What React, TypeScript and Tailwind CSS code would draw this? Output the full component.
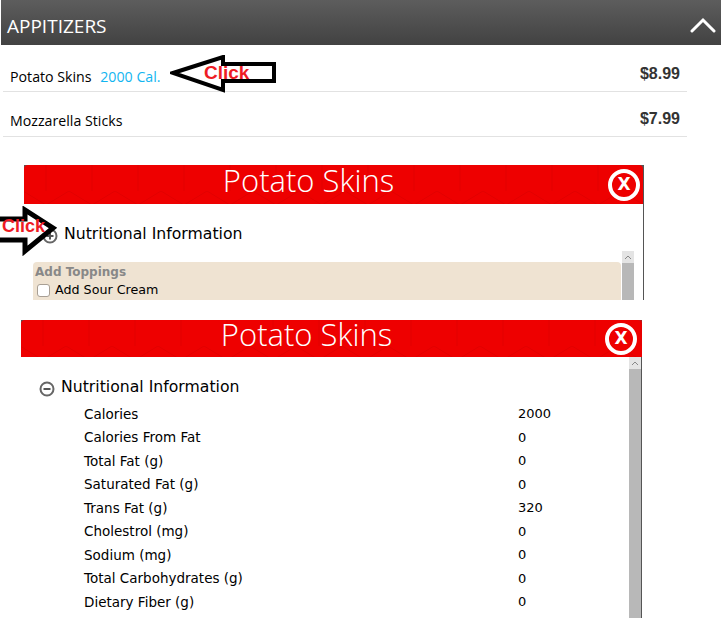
import React from "react";

const nutrition = [
  ["Calories", "2000"],
  ["Calories From Fat", "0"],
  ["Total Fat (g)", "0"],
  ["Saturated Fat (g)", "0"],
  ["Trans Fat (g)", "320"],
  ["Cholestrol (mg)", "0"],
  ["Sodium (mg)", "0"],
  ["Total Carbohydrates (g)", "0"],
  ["Dietary Fiber (g)", "0"],
];

const HexPattern = ({ id }: { id: string }) => (
  <svg className="absolute inset-0 w-full h-full" aria-hidden="true">
    <defs>
      <pattern id={id} width="92" height="40" patternUnits="userSpaceOnUse" x="-24" y="-14">
        <path d="M0 14 L23 0 L46 14 L69 0 L92 14 M0 14 V40 M46 14 V40 M92 14 V40" fill="none" stroke="#e20000" strokeWidth="1" />
      </pattern>
    </defs>
    <rect width="100%" height="100%" fill={`url(#${id})`} />
  </svg>
);

const CloseIcon = () => (
  <div className="w-8 h-8 rounded-full border-[4px] border-white flex items-center justify-center bg-[#ee0000] text-white font-bold text-[17px] leading-none font-['DejaVu_Sans',sans-serif]">
    X
  </div>
);

const ModalHeader = ({
  id,
  heightClass,
  closeClass,
  titleClass,
}: {
  id: string;
  heightClass: string;
  closeClass: string;
  titleClass: string;
}) => (
  <div className="bg-[#555]">
    <div className={`relative ${heightClass} bg-[#ee0000] flex items-start justify-center rounded-t-[4px]`}>
      <HexPattern id={id} />
      <span className={`relative -ml-[50px] text-[31px] text-white font-light font-['Open_Sans',sans-serif] ${titleClass}`}>
        Potato Skins
      </span>
      <div className={`absolute top-1/2 -translate-y-1/2 ${closeClass}`}>
        <CloseIcon />
      </div>
    </div>
  </div>
);

const ToggleIcon = ({ plus }: { plus?: boolean }) => (
  <svg width="16" height="16" viewBox="0 0 16 16" className="shrink-0 translate-y-[2px]">
    <circle cx="8" cy="8" r="6.500" fill="#fff" stroke="#666" strokeWidth="2" />
    <path d={plus ? "M4.500 8H11.500M8 4.500V11.500" : "M4.500 8H11.500"} stroke="#555" strokeWidth="2" />
  </svg>
);

const ScrollUp = () => (
  <div className="h-3 bg-[#e4e4e4] flex items-center justify-center">
    <svg width="8" height="5" viewBox="0 0 8 5">
      <path d="M1 4L4 1L7 4" fill="none" stroke="#888" strokeWidth="1" />
    </svg>
  </div>
);

export default function App() {
  return (
    <div className="relative w-[724px] h-[618px] overflow-hidden bg-white font-['Open_Sans',sans-serif]">
      {/* accordion header */}
      <div className="ml-px w-[720px] h-[45px] bg-gradient-to-b from-[#5d5d5d] to-[#424242] flex items-center justify-between pl-[6px] pr-[5px]">
        <span className="text-white text-[19px] leading-none pt-[7px]">APPITIZERS</span>
        <svg width="26" height="16" viewBox="0 0 26 16" className="mt-[5px]">
          <path d="M2 14L13 3L24 14" fill="none" stroke="#fff" strokeWidth="3" strokeLinecap="round" />
        </svg>
      </div>

      <div className="ml-[3px] w-[684px]">
        <div className="h-[47px] flex items-end justify-between border-b border-[#e2e2e2] pl-[7px] pr-[7px] pb-[5px]">
          <span className="text-[14.200px] text-black translate-y-px">
            Potato Skins <span className="ml-[5px] text-[#12b5f0]">2000 Cal.</span>
          </span>
          <span className="text-[16px] font-bold text-[#333] font-['Liberation_Sans',sans-serif]">$8.99</span>
        </div>
        <div className="h-[45px] flex items-end justify-between border-b border-[#e2e2e2] pl-[7px] pr-[7px] pb-[5px]">
          <span className="text-[14.200px] text-black">Mozzarella Sticks</span>
          <span className="text-[16px] font-bold text-[#333] font-['Liberation_Sans',sans-serif]">$7.99</span>
        </div>
      </div>

      {/* first modal, collapsed */}
      <div className="mt-[28px] ml-[24px] w-[620px] h-[135px] border-r border-[#555] font-['DejaVu_Sans',sans-serif]">
        <ModalHeader id="hex-a" heightClass="h-[39px]" closeClass="right-[3px]" titleClass="leading-[30px]" />
        <div className="flex items-center gap-[6px] pl-[18px] pt-[20px]">
          <ToggleIcon plus />
          <span className="text-[15.700px] leading-5 text-black">Nutritional Information</span>
        </div>
        <div className="flex mt-[7px] pl-[9px] pr-[9px]">
          <div className="flex-1 h-[38px] mt-[11px] bg-[#efe3d2] rounded-t-sm pl-[2px] pt-[2px]">
            <div className="text-[12px] leading-4 font-bold text-[#888]">Add Toppings</div>
            <div className="flex items-center gap-[5px] pl-[2px] text-[12.700px] leading-[20px] text-black">
              <span className="w-[13px] h-[13px] rounded-[3px] bg-white border border-[#a89f94]" />
              Add Sour Cream
            </div>
          </div>
          <div className="w-3 ml-px bg-[#b8b8b8]">
            <ScrollUp />
          </div>
        </div>
      </div>

      {/* second modal, expanded */}
      <div className="mt-[20px] ml-[21px] w-[621px] font-['DejaVu_Sans',sans-serif]">
        <ModalHeader id="hex-b" heightClass="h-[37px]" closeClass="right-[5px]" titleClass="leading-[28px]" />
        <div className="flex h-[261px] border-r border-[#555]">
          <div className="flex-1">
            <div className="flex items-center gap-[6px] pl-[18px] pt-[20px]">
              <ToggleIcon />
              <span className="text-[15.700px] leading-5 text-black">Nutritional Information</span>
            </div>
            <div className="mt-[5px] pl-[63px]">
              {nutrition.map(([label, value]) => (
                <div key={label} className="flex h-[23.500px] items-center text-black">
                  <span className="w-[434px] text-[13.500px]">{label}</span>
                  <span className="text-[13px]">{value}</span>
                </div>
              ))}
            </div>
          </div>
          <div className="w-3 bg-[#b8b8b8]">
            <ScrollUp />
          </div>
        </div>
      </div>

      {/* annotation arrows */}
      <svg className="absolute left-[170px] top-[55px]" width="106" height="38" viewBox="0 0 106 38">
        <path d="M3 18L53 2V9H104V26H53V35Z" fill="#fff" stroke="#000" strokeWidth="4" />
      </svg>
      <span className="absolute left-[204px] top-[63px] text-[19px] leading-5 font-bold text-[#ee1c25] font-['Liberation_Sans',sans-serif]">
        Click
      </span>
      <svg className="absolute left-0 top-[206px]" width="58" height="50" viewBox="0 0 58 50">
        <path d="M-4 13H25V4L53 22L25 45V34H-4Z" fill="#fff" stroke="#000" strokeWidth="5" />
      </svg>
      <span className="absolute left-[2px] top-[216px] text-[18px] leading-5 font-bold text-[#ee1c25] font-['Liberation_Sans',sans-serif]">
        Click
      </span>
    </div>
  );
}
